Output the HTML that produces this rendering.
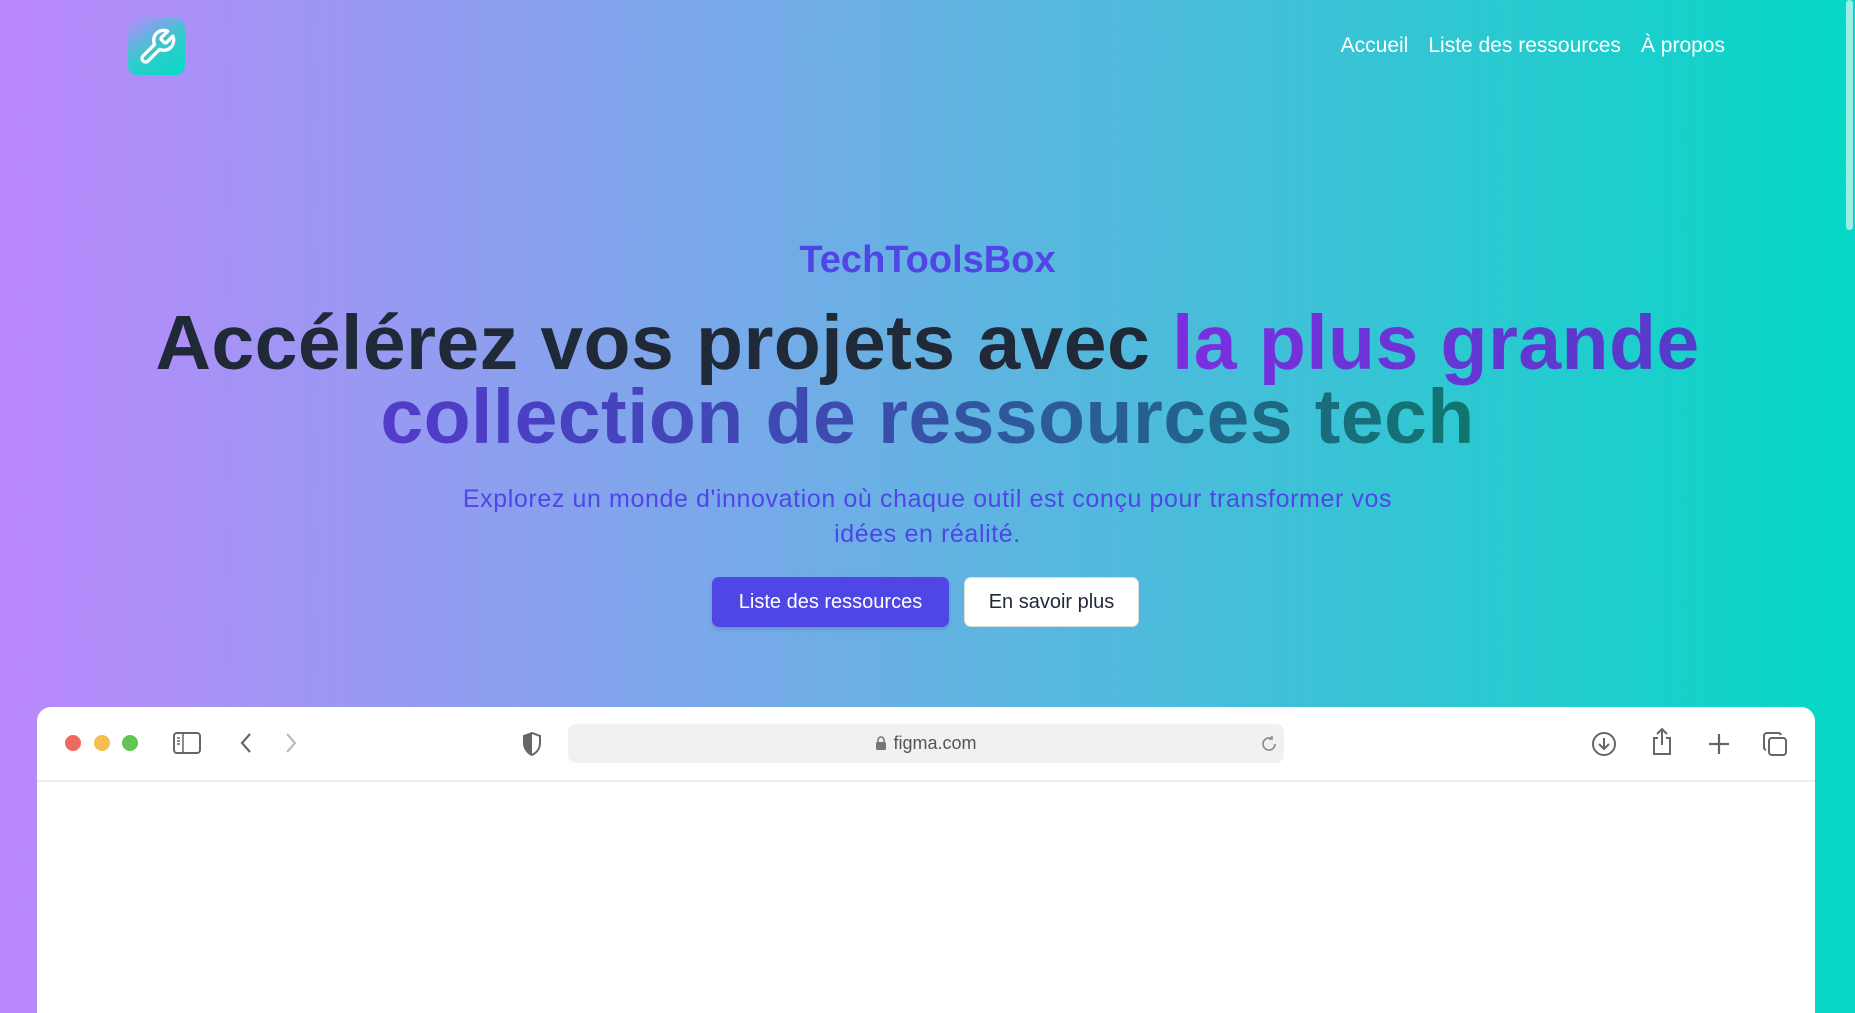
<!DOCTYPE html>
<html><head><meta charset="utf-8"><style>
*{margin:0;padding:0;box-sizing:border-box}
html,body{width:1855px;height:1013px;overflow:hidden}
body{font-family:"Liberation Sans",sans-serif;background:linear-gradient(90deg,#bb88fc 0%,#6eaee6 45%,#05d8c5 100%);position:relative}
.logo{position:absolute;left:128px;top:18px;width:57px;height:57px;border-radius:9px;background:linear-gradient(150deg,#b98afc 0%,#2fcccc 55%,#05d8c5 100%);display:flex;align-items:center;justify-content:center}
nav{position:absolute;top:34px;right:130px;display:flex;gap:20px;color:#fff;font-size:21px}
.t1{position:absolute;top:239px;width:100%;text-align:center;color:#4f46e5;font-weight:bold;font-size:38px}
h1{position:absolute;top:306px;left:0;width:100%;text-align:center;font-size:77px;line-height:74px;letter-spacing:0.4px;color:#1f2937;white-space:nowrap}
.g{background:linear-gradient(90deg,#7c2ee0 0%,#4a3fc4 40%,#3d4bb0 60%,#0f766e 100%);-webkit-background-clip:text;background-clip:text;color:transparent}
.sub{position:absolute;top:482px;left:0;width:100%;text-align:center;color:#4f46e5;font-size:25px;letter-spacing:0.6px;line-height:35px}
.b1,.b2{position:absolute;top:577px;height:50px;border-radius:7px;font-size:20px;display:flex;align-items:center;justify-content:center}
.b1{left:712px;width:237px;background:#4f46e5;color:#fff;box-shadow:0 2px 4px rgba(0,0,0,.15)}
.b2{left:964px;width:175px;background:#fff;color:#1f2937;border:1px solid #ddd}
.win{position:absolute;left:37px;top:707px;width:1778px;height:320px;background:#fff;border-radius:14px}
.bar{height:75px;border-bottom:2px solid #ececec;position:relative}
.dot{position:absolute;top:28px;width:16px;height:16px;border-radius:50%}
.url{position:absolute;left:531px;top:17px;width:716px;height:39px;background:#f1f1f1;border-radius:8px;color:#555;font-size:18px;display:flex;align-items:center;justify-content:center;gap:6px}
.ic{position:absolute;top:24px}
.sb{position:absolute;right:2px;top:0;width:7px;height:230px;background:rgba(255,255,255,.6);border-radius:4px}
</style></head><body>
<div class="logo"><svg width="40" height="40" viewBox="0 0 24 24" fill="none" stroke="#fff" stroke-width="2" stroke-linecap="round" stroke-linejoin="round"><path d="M14.7 6.3a1 1 0 0 0 0 1.4l1.6 1.6a1 1 0 0 0 1.4 0l3.770-3.77a6 6 0 0 1-7.94 7.94l-6.91 6.91a2.12 2.12 0 0 1-3-3l6.91-6.91a6 6 0 0 1 7.94-7.94l-3.76 3.76z"/></svg></div>
<nav><span>Accueil</span><span>Liste des ressources</span><span>À propos</span></nav>
<div class="sb"></div>
<div class="t1">TechToolsBox</div>
<h1>Accélérez vos projets avec <span class="g">la plus grande<br>collection de ressources tech</span></h1>
<div class="sub">Explorez un monde d'innovation où chaque outil est conçu pour transformer vos<br>idées en réalité.</div>
<div class="b1">Liste des ressources</div>
<div class="b2">En savoir plus</div>
<div class="win"><div class="bar">
<div class="dot" style="left:28px;background:#ec6a5e"></div>
<div class="dot" style="left:57px;background:#f4bf4f"></div>
<div class="dot" style="left:85px;background:#61c554"></div>
<svg class="ic" style="left:136px" width="28" height="24" viewBox="0 0 28 24" fill="none" stroke="#666" stroke-width="2"><rect x="1" y="2" width="26" height="20" rx="3"/><path d="M10 2v20M4 7h3M4 10h3M4 13h3" stroke-width="1.5"/></svg>
<svg class="ic" style="left:201px" width="16" height="24" viewBox="0 0 16 24" fill="none" stroke="#666" stroke-width="2.2"><path d="M12 3L4 12l8 9"/></svg>
<svg class="ic" style="left:246px" width="16" height="24" viewBox="0 0 16 24" fill="none" stroke="#bbb" stroke-width="2.2"><path d="M4 3l8 9-8 9"/></svg>
<svg class="ic" style="left:484px" width="22" height="26" viewBox="0 0 22 26"><path d="M11 2L3 5v7c0 6 4 10 8 12 4-2 8-6 8-12V5z" fill="none" stroke="#666" stroke-width="2"/><path d="M11 2L3 5v7c0 6 4 10 8 12z" fill="#666"/></svg>
<div class="url"><svg width="12" height="15" viewBox="0 0 12 15"><path d="M3 6V4a3 3 0 0 1 6 0v2" fill="none" stroke="#777" stroke-width="1.6"/><rect x="1" y="6" width="10" height="8" rx="1.5" fill="#777"/></svg>figma.com</div>
<svg class="ic" style="left:1223px;top:28px" width="18" height="18" viewBox="0 0 18 18" fill="none" stroke="#888" stroke-width="1.6"><path d="M15 9a6 6 0 1 1-3-5.2M12 1v3h-3"/></svg>
<svg class="ic" style="left:1554px" width="26" height="26" viewBox="0 0 26 26" fill="none" stroke="#666" stroke-width="2"><circle cx="13" cy="13" r="11"/><path d="M13 7v11M8 13l5 5 5-5"/></svg>
<svg class="ic" style="left:1613px;top:20px" width="24" height="30" viewBox="0 0 24 30" fill="none" stroke="#666" stroke-width="2"><path d="M8 11H4v16h16V11h-4M12 2v16M7 7l5-5 5 5"/></svg>
<svg class="ic" style="left:1670px" width="24" height="26" viewBox="0 0 24 26" fill="none" stroke="#666" stroke-width="2.2"><path d="M12 3v20M2 13h20"/></svg>
<svg class="ic" style="left:1725px" width="26" height="26" viewBox="0 0 26 26" fill="none" stroke="#666" stroke-width="2"><rect x="7" y="7" width="17" height="17" rx="3"/><path d="M19 4a3 3 0 0 0-3-2H5a3 3 0 0 0-3 3v11a3 3 0 0 0 2 3"/></svg>
</div></div>
</body></html>
